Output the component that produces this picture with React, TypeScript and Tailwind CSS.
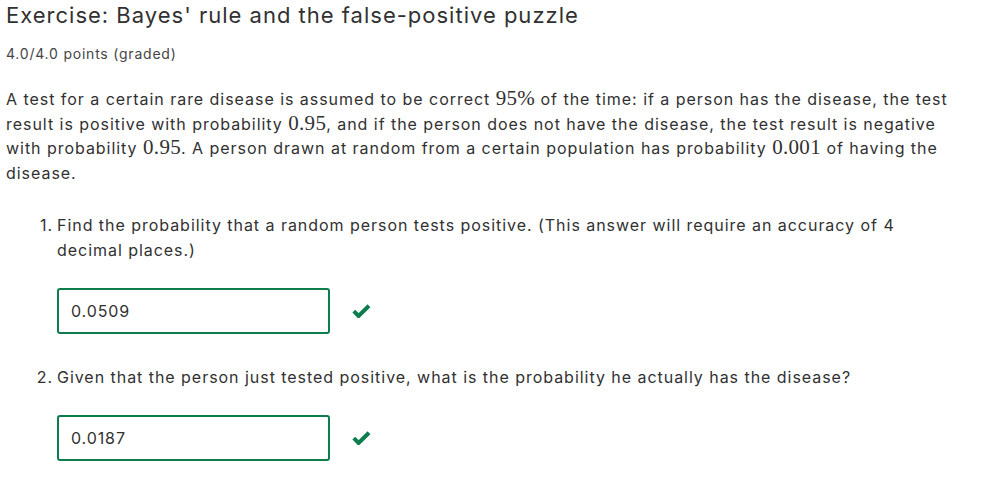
import React from 'react';

const Math: React.FC<{ children: React.ReactNode }> = ({ children }) => (
  <span className="font-['Liberation_Serif',serif] text-[21px] leading-none tracking-[0.3px]">{children}</span>
);

const Check: React.FC = () => (
  <svg width="19" height="14" viewBox="0 0 19 14" className="shrink-0">
    <path d="M1.8 7.2 L6.6 12 L17 1.8" fill="none" stroke="#0d7d4d" strokeWidth="4" strokeLinecap="butt" strokeLinejoin="miter" />
  </svg>
);

const Answer: React.FC<{ value: string }> = ({ value }) => (
  <div className="flex items-center gap-[22px]">
    <div className="w-[273px] h-[46px] border-2 border-[#0d7d4d] rounded-[3px] px-3 flex items-center text-base tracking-[0.9px] text-[#313131] bg-white">
      {value}
    </div>
    <Check />
  </div>
);

const App: React.FC = () => {
  const questions = [
    {
      n: 1,
      text: 'Find the probability that a random person tests positive. (This answer will require an accuracy of 4 decimal places.)',
      answer: '0.0509',
    },
    {
      n: 2,
      text: 'Given that the person just tested positive, what is the probability he actually has the disease?',
      answer: '0.0187',
    },
  ];

  return (
    <div className="min-h-screen bg-white text-[#313131] font-['Inter',sans-serif] px-[6px]">
      {/* Header */}
      <h1 className="pt-px text-[22px] leading-[28px] font-normal tracking-[1px]">Exercise: Bayes' rule and the false-positive puzzle</h1>
      <p className="mt-[15px] text-sm leading-5 tracking-[0.78px] text-[#454545]">4.0/4.0 points (graded)</p>

      {/* Problem */}
      <p className="mt-[23px] w-[955px] text-base leading-[24.6px] tracking-[0.96px]">
        A test for a certain rare disease is assumed to be correct <Math>95%</Math> of the time: if a person has the disease, the test
        result is positive with probability <Math>0.95</Math>, and if the person does not have the disease, the test result is negative
        with probability <Math>0.95</Math>. A person drawn at random from a certain population has probability <Math>0.001</Math> of having the
        disease.
      </p>

      <ol className="mt-[28px]">
        {questions.map((q, i) => (
          <li key={q.n} className={i > 0 ? 'mt-[31px]' : ''}>
            <div className="flex text-base leading-[24.6px] tracking-[0.96px]">
              <span className="w-[51px] text-right pr-[4px]">{q.n}.</span>
              <span className="w-[850px]">{q.text}</span>
            </div>
            <div className={`${i > 0 ? 'mt-[26px]' : 'mt-[25px]'} pl-[51px]`}>
              <Answer value={q.answer} />
            </div>
          </li>
        ))}
      </ol>
    </div>
  );
};

export default App;
